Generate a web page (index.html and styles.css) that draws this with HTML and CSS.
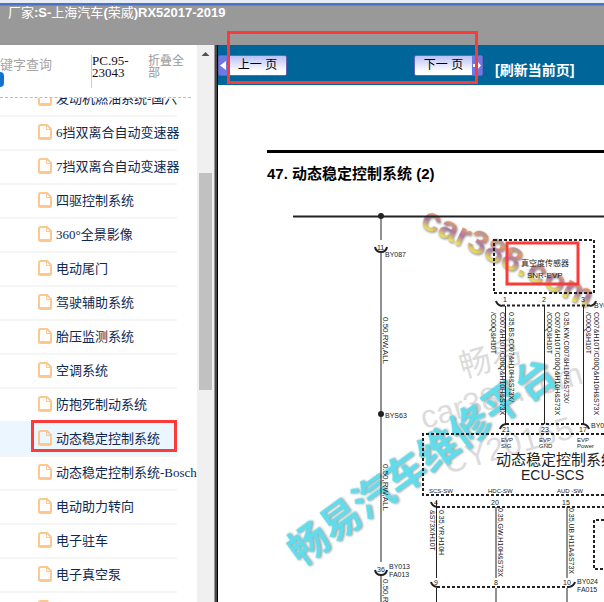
FILE: index.html
```
<!DOCTYPE html>
<html lang="zh-CN">

<head>
    <meta charset="utf-8">
    <meta name="viewport" content="width=device-width, initial-scale=1">
    <title>动态稳定控制系统</title>
    <link rel="stylesheet" href="styles.css">
</head>

<body>
    <header class="top">
        <span class="cn">厂家</span>:S-<span class="cn">上海汽车</span>(<span class="cn">荣威</span>)RX52017-2019
    </header>
    <div class="main">
        <aside class="sidebar">
            <div class="panel">
                <div class="tools">
                    <div class="search">
                        <input type="text" placeholder="键字查询" aria-label="键字查询">
                        <button class="go" aria-label="查询"></button>
                    </div>
                    <span class="code">PC.95-23043</span>
                    <a class="fold" href="#">折叠全部</a>
                </div>
                <ul class="tree" id="tree">
                    <li><a href="#">发动机燃油系统-国六</a></li>
                    <li><a href="#">6挡双离合自动变速器</a></li>
                    <li><a href="#">7挡双离合自动变速器</a></li>
                    <li><a href="#">四驱控制系统</a></li>
                    <li><a href="#">360°全景影像</a></li>
                    <li><a href="#">电动尾门</a></li>
                    <li><a href="#">驾驶辅助系统</a></li>
                    <li><a href="#">胎压监测系统</a></li>
                    <li><a href="#">空调系统</a></li>
                    <li><a href="#">防抱死制动系统</a></li>
                    <li class="active"><a href="#">动态稳定控制系统</a><i class="mark"></i></li>
                    <li><a href="#">动态稳定控制系统-Bosch</a></li>
                    <li><a href="#">电动助力转向</a></li>
                    <li><a href="#">电子驻车</a></li>
                    <li><a href="#">电子真空泵</a></li>
                    <li><a href="#"></a></li>
                </ul>
            </div>
            <div class="scroll">
                <svg width="17" height="17" viewBox="0 0 17 17"><path d="M4.500 11l4-4 4 4z" fill="#505050"/></svg>
                <div class="thumb"></div>
            </div>
        </aside>
        <section class="viewer">
            <nav class="bar">
                <button class="page prev"><svg width="10" height="19" viewBox="0 0 10 19"><path d="M7 5v9L1 9.500z" fill="#fff"/></svg><span>上一 页</span></button>
                <button class="page next"><span>下一 页</span><svg width="10" height="19" viewBox="0 0 10 19"><path d="M1 8h4V5l4 4.500L5 14v-3H1z" fill="#fff"/></svg></button>
                <a class="refresh" href="#">[刷新当前页]</a>
                <i class="mark"></i>
            </nav>
            <div class="sheet">
                <svg class="diagram" width="386" height="517" viewBox="218 85 386 517">
                    <defs>
                        <linearGradient id="rainbow" gradientUnits="userSpaceOnUse" x1="0" y1="-26" x2="0" y2="1">
                            <stop offset="0" stop-color="#7f8fb8"/>
                            <stop offset="0.3" stop-color="#e39a6a"/>
                            <stop offset="0.6" stop-color="#a877a8"/>
                            <stop offset="0.95" stop-color="#f2e84e"/>
                        </linearGradient>
                    </defs>

                    <!-- watermarks -->
                    <g class="wm-gray">
                        <text transform="translate(463 378) rotate(-16)" font-size="32">畅易</text>
                        <text transform="translate(424 429) rotate(-16)" font-size="32">car388.com</text>
                        <text transform="translate(447 474) rotate(-16)" font-size="32">CY20165</text>
                    </g>
                    <text class="wm-cyan" transform="translate(308 543) rotate(-36)" x="-20" y="15">畅易汽车维修平台</text>
                    <text class="wm-car" transform="translate(419 226) rotate(26)">car388.com</text>

                    <!-- solid wires -->
                    <g class="wire">
                        <path d="M267 151.500H604" stroke-width="3" stroke="#000"/>
                        <path d="M293 216.500H604" stroke-width="2"/>
                        <path d="M381 216V240M381 252V562M381 575V602"/>
                        <path d="M505.500 306V424M544.500 306V424M583.500 306V424"/>
                        <path d="M436.500 501V578M496 507V578M567 507V578M436.500 588V602M496 588V602M567 588V602"/>
                    </g>
                    <g class="arc">
                        <path d="M375 247q1 5 6 5t6-5M375 570q1 5 6 5t6-5"/>
                        <path d="M496 301q1 4 6 5M596 301q-1 4-6 5"/>
                        <path d="M500 429q1-4 6-5M589 429q-1-4-6-5"/>
                        <path d="M431 502q1 4 6 5M431 582q1 4 6 5M575 582q-1 4-6 5"/>
                    </g>
                    <circle cx="381" cy="216" r="3"/>
                    <circle cx="381" cy="414" r="3"/>

                    <!-- dashed blocks -->
                    <g class="dash">
                        <rect x="494" y="240" width="100" height="53"/>
                        <path d="M502 305.500H590M506 424H583"/>
                        <path d="M604 434H423V495H604"/>
                        <path d="M437 507H604M437 587H569"/>
                        <path d="M604 520H594V569H604"/>
                    </g>

                    <text class="title" x="267" y="179">47. 动态稳定控制系统 (2)</text>
                    <g class="t8">
                        <text x="521" y="266">真空度传感器</text>
                        <text x="527" y="278">SNR-EVP</text>
                        <text transform="translate(383 317) rotate(90)">0.50,RW,ALL</text>
                        <text transform="translate(383 464) rotate(90)">0.50,RW,ALL</text>
                        <text transform="translate(383 579) rotate(90)">0.50,RW,ALL</text>
                    </g>
                    <g class="t7">
                        <text x="377" y="250">11</text>
                        <text x="385" y="257">BY087</text>
                        <text x="385" y="418">BYS63</text>
                        <text x="377" y="572">36</text>
                        <text x="389" y="569">BY013</text>
                        <text x="389" y="577">FA013</text>
                        <text x="503" y="302">1</text>
                        <text x="542" y="302">2</text>
                        <text x="581" y="302">3</text>
                        <text x="594" y="308">BY0</text>
                        <text x="502" y="432">21</text>
                        <text x="541" y="432">23</text>
                        <text x="579" y="432">17</text>
                        <text x="591" y="428">BY0</text>
                        <text x="434" y="505">4</text>
                        <text x="491" y="505">20</text>
                        <text x="562" y="505">15</text>
                        <text x="434" y="585">9</text>
                        <text x="494" y="585">8</text>
                        <text x="563" y="585">10</text>
                        <text x="577" y="584">BY024</text>
                        <text x="577" y="592">FA015</text>

                        <text transform="translate(491 312) rotate(90)">/C00Q&amp;H10T</text>
                        <text transform="translate(500 312) rotate(90)">C007&amp;H10T/C00Q&amp;H10H&amp;S73X</text>
                        <text transform="translate(509 312) rotate(90)">0.35,BS,C007&amp;H10H&amp;S73X/</text>
                        <text transform="translate(547 312) rotate(90)">/C00Q&amp;H10T</text>
                        <text transform="translate(555 312) rotate(90)">C007&amp;H10T/C00Q&amp;H10H&amp;S73X</text>
                        <text transform="translate(564 312) rotate(90)">0.35,KW,C007&amp;H10H&amp;S73X/</text>
                        <text transform="translate(586 312) rotate(90)">/C00Q&amp;H10T</text>
                        <text transform="translate(594 312) rotate(90)">C007&amp;H10T/C00Q&amp;H10H&amp;S73X</text>
                        <text transform="translate(430 510) rotate(90)">&amp;S73X/H10T</text>
                        <text transform="translate(439 510) rotate(90)">0.35,YR,H10H</text>
                        <text transform="translate(498 508) rotate(90)">0.35,GW,H10H&amp;S73X</text>
                        <text transform="translate(569 508) rotate(90)">0.35,UB,H11A&amp;S73X</text>
                    </g>
                    <g class="t6">
                        <text x="501" y="442">EVP</text>
                        <text x="501" y="448">SIG</text>
                        <text x="539" y="442">EVP</text>
                        <text x="539" y="448">GND</text>
                        <text x="577" y="442">EVP</text>
                        <text x="577" y="448">Power</text>
                        <text x="429" y="493">SCS-SW</text>
                        <text x="488" y="493">HDC-SW</text>
                        <text x="557" y="493">AUD -SW</text>
                    </g>
                    <text x="496" y="465" font-size="15">动态稳定控制系统</text>
                    <text x="521" y="480" font-size="14">ECU-SCS</text>

                    <rect class="frame" x="507" y="243" width="71" height="41"/>
                </svg>
            </div>
        </section>
    </div>
    <script>
        // file icon in front of every entry
        var icon = '<svg class="file" width="14" height="16" viewBox="0 0 14 16">' +
            '<path d="M2.500 1H9l4 4v8.500a1.500 1.500 0 0 1-1.500 1.500h-9A1.500 1.500 0 0 1 1 13.500v-11A1.500 1.500 0 0 1 2.500 1z"/>' +
            '<path class="fine" d="M8.500 1v4.500H13M2 13.500h10"/></svg>';
        var links = document.querySelectorAll("#tree a");
        for (var i = 0; i < links.length; i++) {
            links[i].insertAdjacentHTML("afterbegin", icon);
        }
    </script>
</body>

</html>
```
FILE: styles.css
```
* {
    box-sizing: border-box;
}

body {
    margin: 0;
    height: 100vh;
    display: flex;
    flex-direction: column;
    overflow: hidden;
    background-color: #fff;
    font-family: "Liberation Serif", "Noto Sans CJK SC", serif;
    font-size: 13px;
}

a {
    color: inherit;
    text-decoration: none;
}

button {
    border: 0;
    padding: 0;
    cursor: pointer;
}

.top {
    flex: none;
    height: 45px;
    padding: 0 8px;
    border-top: 3px solid #e9eef6;
    background: linear-gradient(#4a72c8 2px, #999 3px);
    color: #fff;
    font: bold 13px/20px "Liberation Sans", "Noto Sans CJK SC", sans-serif;
    white-space: nowrap;
}

.cn {
    font-weight: normal;
}

.main {
    flex: 1;
    display: flex;
    min-height: 0;
}

/* left side */
.sidebar {
    flex: none;
    display: flex;
    width: 218px;
    background: linear-gradient(to left, #000 1px, #484848 1px, #484848 3px, #999 3px, #999 4px, #fff 4px);
    padding-right: 4px;
}

.panel {
    flex: 1;
    min-width: 0;
    display: flex;
    flex-direction: column;
    overflow: hidden;
}

.tools {
    flex: none;
    display: flex;
    height: 53px;
    margin-right: 6px;
    padding-top: 10px;
    border-bottom: 1px dashed #bbb;
    line-height: 12px;
}

.search {
    width: 91px;
}

.search input {
    display: block;
    width: 88px;
    height: 17px;
    border: 0;
    padding: 0;
    font: 13px/17px "Noto Sans CJK SC", sans-serif;
}

.search input::placeholder {
    color: #a5a5a5;
}

.go {
    display: block;
    width: 4px;
    height: 15px;
    border-radius: 0 4px 4px 0;
    background-color: #0f74d1;
}

.code {
    width: 57px;
    height: 33px;
    padding-right: 12px;
    border-left: 1px solid #ccc;
    color: #111;
}

.fold {
    width: 36px;
    color: #999;
    font-size: 12px;
}

.tree {
    flex: 1;
    min-height: 0;
    margin: 0;
    padding: 0;
    list-style: none;
    overflow: hidden;
}

.tree li {
    position: relative;
    width: 177px;
    height: 34px;
    border-bottom: 2px solid #f5f5f5;
}

/* list is scrolled a little, first row is cut */
.tree li:first-child {
    margin-top: -15px;
}

.tree a {
    display: flex;
    align-items: center;
    gap: 4px;
    height: 32px;
    padding: 0 0 3px 38px;
    color: #0f2850;
    white-space: nowrap;
}

.tree .active {
    background-color: #ecf6ff;
    box-shadow: 0 -2px #ecf6ff;
}

.file {
    flex: none;
    fill: none;
    stroke: #fdc88e;
    stroke-width: 2;
}

.file .fine {
    stroke-width: 1;
}

.mark {
    position: absolute;
    border: 3px solid #fb3a3a;
    pointer-events: none;
}

.tree .mark {
    top: -3px;
    left: 31px;
    right: 0;
    height: 32px;
}

.scroll {
    flex: none;
    width: 17px;
    background-color: #f0f0f0;
}

.scroll svg {
    display: block;
}

.thumb {
    height: 217px;
    margin: 111px 2px 0;
    background-color: #c1c1c1;
}

/* right side */
.viewer {
    flex: 1;
    min-width: 0;
    display: flex;
    flex-direction: column;
}

.bar {
    position: relative;
    flex: none;
    display: flex;
    align-items: center;
    height: 40px;
    background-color: #069;
}

.bar .mark {
    top: -14px;
    left: 9px;
    width: 251px;
    height: 53px;
}

.page {
    display: flex;
    align-items: center;
    width: 69px;
    height: 21px;
    border: 1px solid #6a62b8;
    border-radius: 2px;
    background: linear-gradient(#b9c0f5, #fff 80%);
    color: #000;
    font: 12px/19px "Liberation Sans", "Noto Sans CJK SC", sans-serif;
}

.page span {
    flex: 1;
    text-align: center;
    white-space: nowrap;
}

.page svg {
    flex: none;
    background-color: #6a7be6;
}

.next {
    margin-left: 127px;
}

.refresh {
    margin: 10px 0 0 12px;
    color: #fff;
    font: bold 14px/20px "Liberation Sans", "Noto Sans CJK SC", sans-serif;
    white-space: nowrap;
}

.sheet {
    flex: 1;
    min-height: 0;
    overflow: hidden;
}

.diagram {
    display: block;
    font-family: "Liberation Sans", "Noto Sans CJK SC", sans-serif;
    fill: #222;
}

.wire,
.arc,
.dash {
    fill: none;
    stroke: #222;
}

.arc {
    stroke-width: 2;
}

.dash {
    stroke-width: 2;
    stroke-dasharray: 3 2;
}

.title {
    font-size: 15px;
    font-weight: bold;
    fill: #000;
}

.t8 {
    font-size: 8px;
}

.t7 {
    font-size: 7px;
}

.t6 {
    font-size: 6px;
}

.frame {
    fill: none;
    stroke: #fb3a3a;
    stroke-width: 3;
}

.wm-gray {
    fill: #dcdcdc;
}

.wm-cyan {
    font-size: 40px;
    font-weight: bold;
    fill: #62dcea;
    filter: drop-shadow(1px 1px 1px #999);
}

.wm-car {
    font-size: 34px;
    font-weight: bold;
    fill: url(#rainbow);
    filter: drop-shadow(1px 1px 1px #888);
}
```
